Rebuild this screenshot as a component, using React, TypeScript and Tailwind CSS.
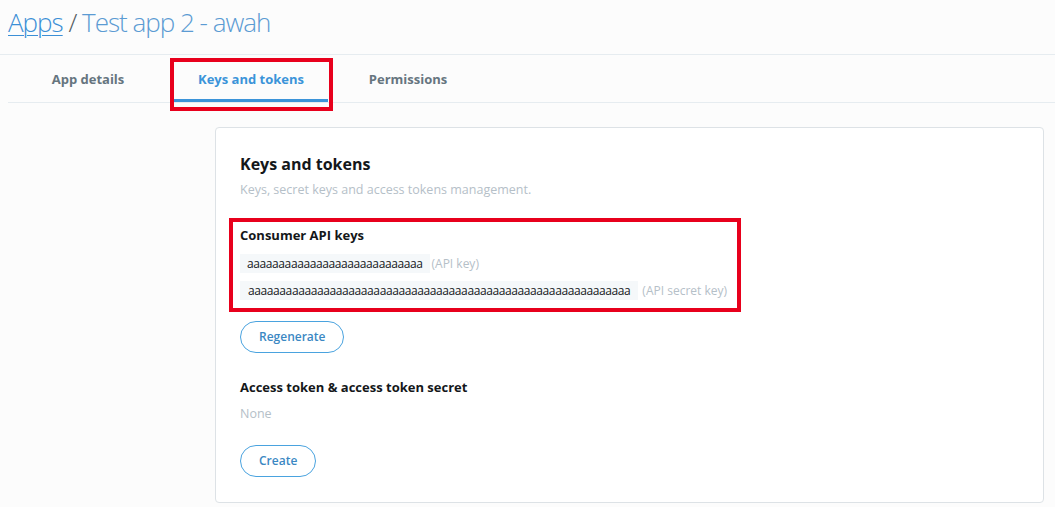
import React from 'react';

const tabs = ['App details', 'Keys and tokens', 'Permissions'];

const App: React.FC = () => {
  return (
    <div className="relative min-h-[507px] w-full bg-[#fcfcfc] font-['Open_Sans',sans-serif] text-[#14171a]">
      <header className="h-[55px] border-b border-[#e6ecf0] pl-2 pt-[5px]">
        <h1 className="text-[26px] font-light leading-[34px] tracking-[-1px] text-[#5b9bd3]">
          <a className="text-[#3b8fd6] underline decoration-1 underline-offset-[3px]">Apps</a>
          <span className="text-[#555c63]"> / </span>
          Test app 2 - awah
        </h1>
      </header>

      <nav className="ml-2 flex h-[48px] border-b border-[#e6ecf0]">
        {tabs.map((t, i) => (
          <div key={t} className="flex w-[160px] justify-center">
            <div
              className={
                i === 1
                  ? 'ml-[6px] flex h-[47px] w-[154px] items-center justify-center border-b-[3px] border-[#3b94d9] pt-[6px] text-[13px] font-bold text-[#3b94d9]'
                  : 'flex h-[47px] items-center justify-center pt-[3px] text-[13px] font-bold text-[#66757f]'
              }
            >
              {t}
            </div>
          </div>
        ))}
      </nav>

      <main className="ml-[215px] mr-[11px] mt-[24px] rounded-[4px] border border-[#dde2e6] bg-white px-6 pb-[25px] pt-[26px]">
        <h2 className="text-[16px] font-bold leading-[20px]">Keys and tokens</h2>
        <p className="mt-[7px] text-[12.5px] leading-[18px] text-[#b5c0c8]">
          Keys, secret keys and access tokens management.
        </p>

        <h3 className="mt-[27px] text-[13px] font-bold leading-[18px]">Consumer API keys</h3>
        <div className="mt-[10px] flex h-[19px] items-center">
          <span className="bg-[#f5f8fa] px-[7px] text-[12px] leading-[19px] tracking-[-0.4px]">
            aaaaaaaaaaaaaaaaaaaaaaaaaaaa
          </span>
          <span className="ml-[2px] text-[12px] text-[#b5c0c8]">(API key)</span>
        </div>
        <div className="mt-[8px] flex h-[19px] items-center">
          <span className="bg-[#f5f8fa] px-[8px] text-[12px] leading-[19px] tracking-[-0.4px]">
            aaaaaaaaaaaaaaaaaaaaaaaaaaaaaaaaaaaaaaaaaaaaaaaaaaaaaaaaaaaaa
          </span>
          <span className="ml-[4px] text-[12px] text-[#b5c0c8]">(API secret key)</span>
        </div>

        <button className="mt-[21px] flex h-[32px] items-center rounded-full border border-[#4aa3df] px-[18px] text-[12px] font-semibold text-[#3b88c3]">
          Regenerate
        </button>

        <h3 className="mt-[25px] text-[13px] font-bold leading-[18px]">Access token &amp; access token secret</h3>
        <p className="mt-[9px] text-[12.5px] leading-[18px] text-[#b5c0c8]">None</p>

        <button className="mt-[22px] flex h-[32px] items-center rounded-full border border-[#4aa3df] px-[18px] text-[12px] font-semibold text-[#3b88c3]">
          Create
        </button>
      </main>

      {/* red annotation boxes */}
      <div className="pointer-events-none absolute left-[170px] top-[58px] h-[53px] w-[163px] border-4 border-[#e8001c]" />
      <div className="pointer-events-none absolute left-[229px] top-[218px] h-[94px] w-[512px] border-4 border-[#e8001c]" />
    </div>
  );
};

export default App;
